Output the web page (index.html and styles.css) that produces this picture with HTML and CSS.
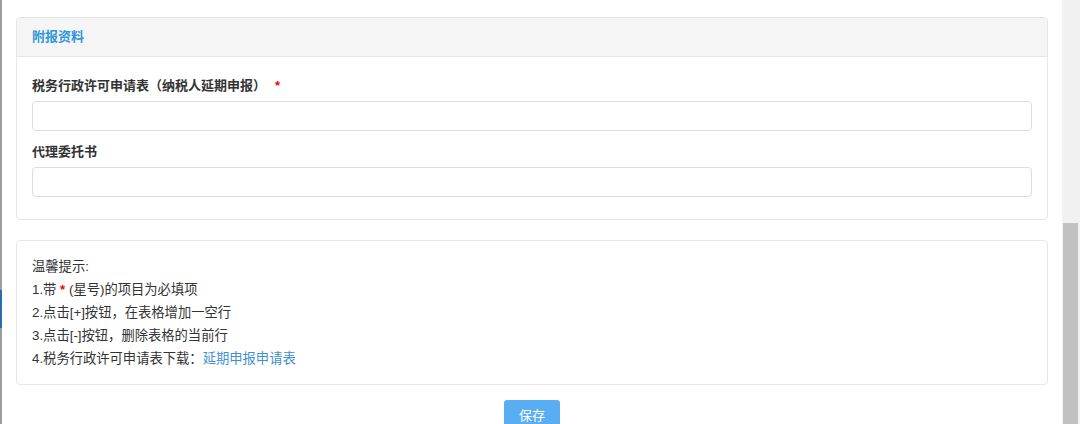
FILE: index.html
```html
<!DOCTYPE html>
<html lang="zh-CN">

<head>
    <meta charset="UTF-8" />
    <meta name="viewport" content="width=device-width, initial-scale=1.0" />
    <title>附报资料</title>
    <link rel="stylesheet" href="styles.css">
</head>

<body>

    <div class="page">
        <div class="edge">
            <div class="edge-mark"></div>
        </div>

        <div class="content">
            <div class="panel">
                <div class="panel-heading">附报资料</div>
                <div class="panel-body">
                    <div class="form-group">
                        <label>税务行政许可申请表（纳税人延期申报）<span class="required">*</span></label>
                        <input type="text" class="form-control" />
                    </div>
                    <div class="form-group">
                        <label>代理委托书</label>
                        <input type="text" class="form-control" />
                    </div>
                </div>
            </div>

            <div class="panel tips">
                <p>温馨提示:</p>
                <p>1.带 <span class="star">*</span> (星号)的项目为必填项</p>
                <p>2.点击[+]按钮，在表格增加一空行</p>
                <p>3.点击[-]按钮，删除表格的当前行</p>
                <p>4.税务行政许可申请表下载：<a href="#">延期申报申请表</a></p>
            </div>

            <div class="actions">
                <button type="button" class="btn-save">保存</button>
            </div>
        </div>

        <div class="scrollbar">
            <div class="scroll-thumb"></div>
        </div>
    </div>

</body>

</html>
```

FILE: styles.css
```css
body {
    margin: 0;
    background: #fff;
    font-family: "Liberation Sans", "Noto Sans CJK SC", sans-serif;
    font-size: 13px;
    color: #333;
    overflow: hidden;
}

.page {
    display: flex;
    height: 424px;
}

/* strip of the page behind the dialog */
.edge {
    width: 2px;
    background: #9c9c9c;
    padding-top: 290px;
}

.edge-mark {
    height: 38px;
    background: #2a6cae;
}

.content {
    flex: 1;
    padding: 17px 14px 0;
}

.panel {
    border: 1px solid #e6e6e6;
    border-radius: 4px;
    background: #fff;
}

.panel-heading {
    height: 38px;
    line-height: 38px;
    padding: 0 15px;
    background: #f5f5f5;
    border-bottom: 1px solid #e6e6e6;
    border-radius: 4px 4px 0 0;
    color: #2f95de;
    font-weight: bold;
}

.panel-body {
    padding: 19px 15px 22px;
    display: flex;
    flex-direction: column;
    gap: 11px;
}

.form-group label {
    display: block;
    line-height: 20px;
    margin-bottom: 5px;
    font-weight: bold;
}

.required {
    color: #f00;
    margin-left: 9px;
}

.form-control {
    display: block;
    width: 100%;
    height: 30px;
    box-sizing: border-box;
    border: 1px solid #dcdcdc;
    border-radius: 4px;
    padding: 4px 8px;
    font: inherit;
}

.tips {
    margin-top: 20px;
    padding: 14px 15px;
    font-size: 13.3px;
}

.tips p {
    margin: 0;
    line-height: 23px;
}

.star {
    color: #f00;
    font-weight: bold;
}

.tips a {
    color: #3f8fd2;
    text-decoration: none;
}

.actions {
    text-align: center;
    padding-top: 15px;
}

.btn-save {
    width: 56px;
    height: 28px;
    border: none;
    border-radius: 3px;
    background: #59adf2;
    color: #fff;
    font: inherit;
    cursor: pointer;
}

.scrollbar {
    width: 18px;
    background: #f1f1f1;
    padding-top: 223px;
    box-sizing: border-box;
}

.scroll-thumb {
    height: 201px;
    margin: 0 2px 0 1px;
    background: #c1c1c1;
}
```
